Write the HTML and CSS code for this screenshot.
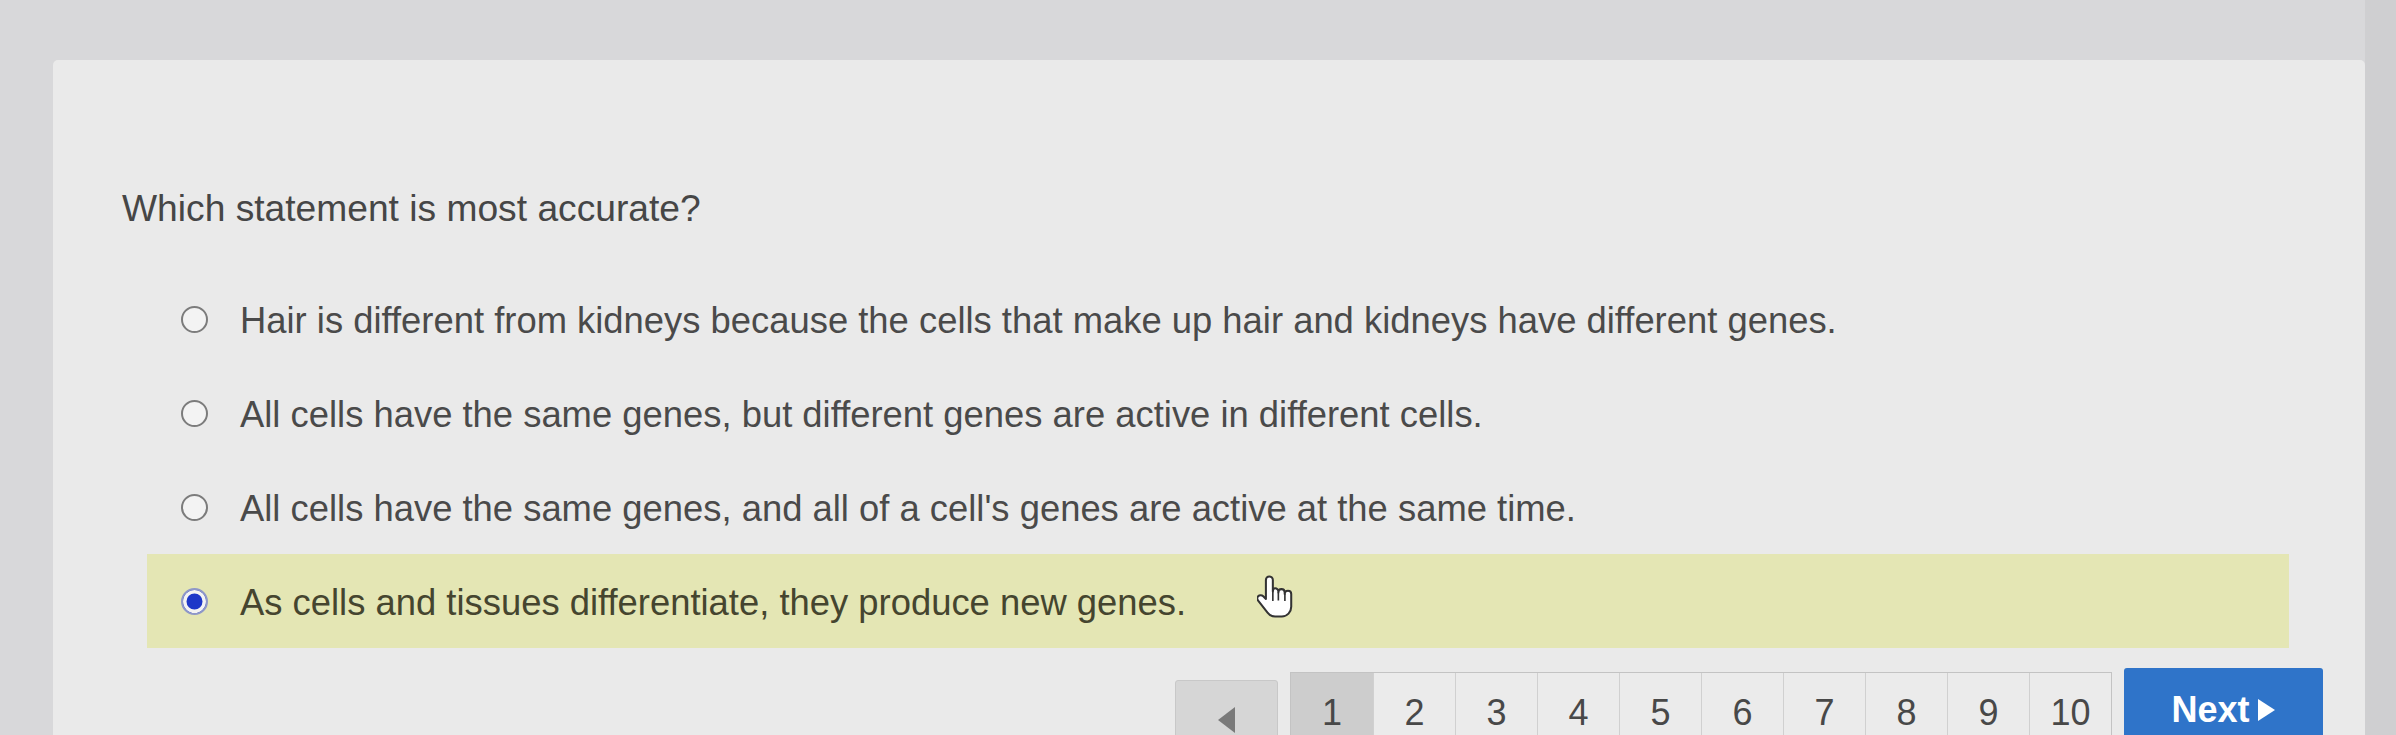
FILE: index.html
```html
<!DOCTYPE html>
<html lang="en">
<head>
<meta charset="utf-8">
<title>Question</title>
<link rel="stylesheet" href="styles.css">
</head>
<body>
<div class="screen">
  <main class="card">
    <h1 class="question">Which statement is most accurate?</h1>
    <ul class="options">
      <li class="option"><span class="radio"></span><span class="label">Hair is different from kidneys because the cells that make up hair and kidneys have different genes.</span></li>
      <li class="option"><span class="radio"></span><span class="label">All cells have the same genes, but different genes are active in different cells.</span></li>
      <li class="option"><span class="radio"></span><span class="label">All cells have the same genes, and all of a cell's genes are active at the same time.</span></li>
      <li class="option selected"><span class="radio checked"></span><span class="label">As cells and tissues differentiate, they produce new genes.</span></li>
    </ul>
    <nav class="pager">
      <button class="prev" type="button" aria-label="Previous"><span class="tri-left"></span></button>
      <div class="pages">
        <span class="page active">1</span>
        <span class="page">2</span>
        <span class="page">3</span>
        <span class="page">4</span>
        <span class="page">5</span>
        <span class="page">6</span>
        <span class="page">7</span>
        <span class="page">8</span>
        <span class="page">9</span>
        <span class="page">10</span>
      </div>
      <button class="next" type="button">Next <svg class="next-arrow" viewBox="0 0 20 24" width="20" height="24"><path d="M2 1 L19 12 L2 23 Z" fill="#fff"/></svg></button>
    </nav>
    <svg class="cursor" viewBox="0 0 18 24" width="37" height="49" aria-hidden="true">
      <path d="M6 1.2c-1 0-1.7.8-1.7 1.7v9.3l-1.3-1.3c-.7-.7-1.9-.7-2.5 0-.6.6-.5 1.5 0 2.1l4.6 5.9c.9 1.2 2.2 1.9 3.7 1.9h3.3c2.6 0 4.6-2.1 4.6-4.7V9.8c0-.9-.7-1.6-1.6-1.6s-1.6.7-1.6 1.6V9c0-.9-.7-1.6-1.6-1.6S10.4 8.1 10.4 9v-.4c0-.9-.7-1.6-1.6-1.6s-1.1.7-1.1 1.6V2.9C7.7 2 7 1.2 6 1.2z" fill="#fff" stroke="#333" stroke-width="1" stroke-linejoin="round"/>
      <path d="M10.4 9v4M13.6 9.8v3.4M7.7 8.6v4.6" stroke="#333" stroke-width=".8" fill="none"/>
    </svg>
  </main>
  <div class="edge"></div>
</div>
</body>
</html>
```

FILE: styles.css
```css
* { box-sizing: border-box; }

html, body {
  margin: 0;
  padding: 0;
  height: 735px;
  overflow: hidden;
}

body {
  background: #d8d8da;
  font-family: "Liberation Sans", Arial, sans-serif;
  color: #484848;
}

.screen {
  display: flex;
  height: 735px;
  padding-top: 60px;
  padding-left: 53px;
}

.card {
  position: relative;
  width: 2312px;
  background: #eaeaea;
  border-radius: 5px 5px 0 0;
  padding: 126px 42px 0 94px;
}

.edge {
  flex: 1;
  background: #cfcfd1;
  margin-top: -60px;
}

.question {
  margin: 0 0 42px -25px;
  font-size: 37.2px;
  line-height: 44px;
  font-weight: normal;
  color: #464646;
}

.options {
  list-style: none;
  margin: 0;
  padding: 0;
  width: 2142px;
}

.option {
  display: flex;
  align-items: center;
  height: 94px;
  padding-left: 34px;
  font-size: 36.4px;
  color: #4a4a4a;
}

.option.selected {
  background: #e4e6b4;
  color: #45452f;
}

.option .label {
  padding-top: 4px;
}

.radio {
  flex: none;
  width: 27px;
  height: 27px;
  border-radius: 50%;
  border: 2.5px solid #7c7c7c;
  background: #f3f3f3;
  margin-right: 32px;
}

.radio.checked {
  border: 2.5px solid #8f98c8;
  background: #1d37c8;
  box-shadow: inset 0 0 0 3.5px #f3f3f3;
}

.pager {
  display: flex;
  justify-content: flex-end;
  align-items: flex-start;
  gap: 12px;
  margin-top: 24px;
}

.prev {
  width: 103px;
  height: 90px;
  margin-top: 8px;
  border: 1px solid #c8c8c8;
  border-radius: 3px;
  background: #d6d6d6;
  display: flex;
  justify-content: center;
  align-items: flex-start;
  padding: 26px 0 0;
}

.tri-left {
  width: 0;
  height: 0;
  border-top: 13px solid transparent;
  border-bottom: 13px solid transparent;
  border-right: 17px solid #7a7a7a;
}

.pages {
  display: flex;
  border: 1px solid #c3c3c3;
  background: #ebebeb;
}

.page {
  width: 82px;
  height: 92px;
  padding-top: 22px;
  line-height: 36px;
  text-align: center;
  font-size: 36px;
  color: #484848;
  border-left: 1px solid #d0d0d0;
}

.page:first-child { border-left: none; }

.page.active { background: #cdcdcd; }

.next {
  width: 199px;
  height: 92px;
  margin-top: -4px;
  border: none;
  border-radius: 3px;
  background: #2f74c9;
  color: #fff;
  font-family: "Liberation Sans", Arial, sans-serif;
  font-size: 36px;
  line-height: 36px;
  font-weight: bold;
  display: flex;
  justify-content: center;
  align-items: flex-start;
  gap: 6px;
  padding: 24px 0 0;
}

.next-arrow { margin-top: 6px; }

.cursor {
  position: absolute;
  left: 1204px;
  top: 514px;
}
```
